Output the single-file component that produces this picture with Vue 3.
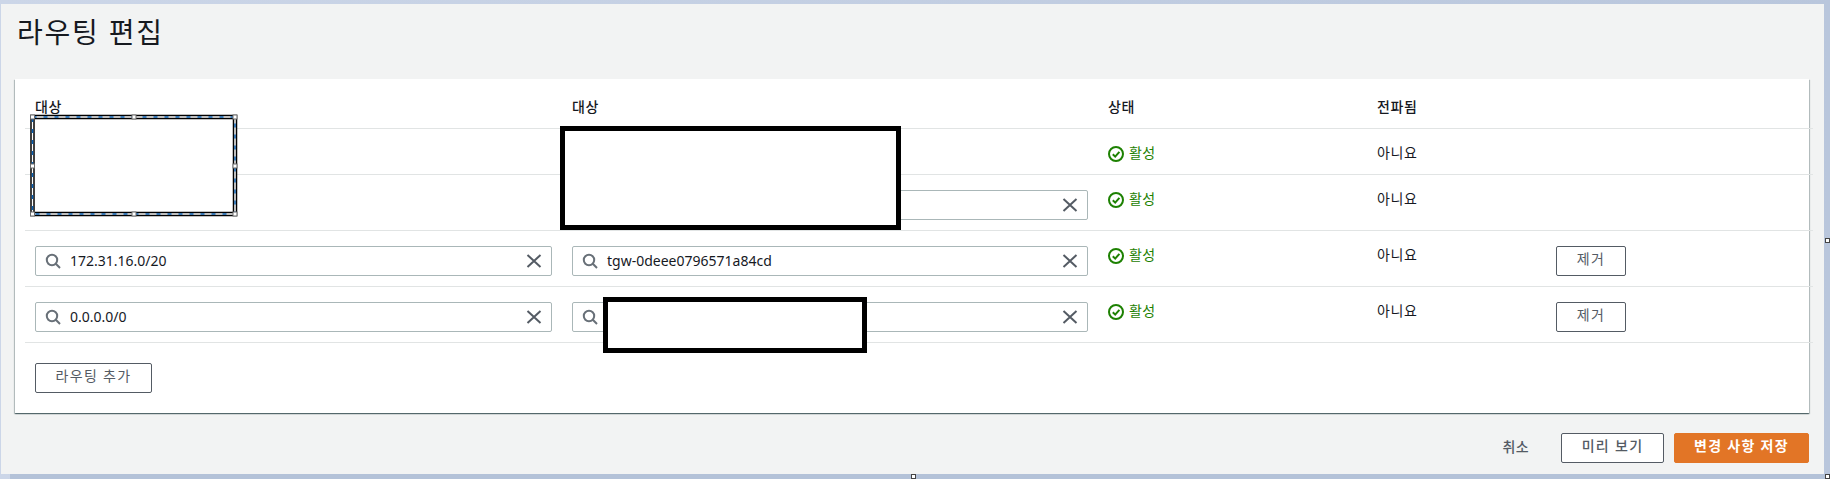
<script setup>
const rows = [
  { dest: null, target: null, removable: false },
  { dest: null, target: "", removable: false },
  { dest: "172.31.16.0/20", target: "tgw-0deee0796571a84cd", removable: true },
  { dest: "0.0.0.0/0", target: "", removable: true },
];

// handles of the selected redaction box
const handles = [
  [4.5, 5], [106, 5], [207, 5],
  [4.5, 54], [207, 54],
  [4.5, 102], [106, 102], [207, 102],
];
</script>

<template>
  <div class="window">
    <div class="page">
      <h1 class="title">라우팅 편집</h1>

      <section class="card">
        <table class="routes">
          <colgroup>
            <col class="col-dest" />
            <col class="col-target" />
            <col class="col-status" />
            <col class="col-prop" />
            <col />
          </colgroup>
          <thead>
            <tr>
              <th class="first">대상</th>
              <th>대상</th>
              <th>상태</th>
              <th>전파됨</th>
              <th></th>
            </tr>
          </thead>
          <tbody>
            <tr v-for="(row, i) in rows" :key="i">
              <td class="first">
                <div v-if="row.dest !== null" class="field">
                  <svg class="search" viewBox="0 0 16 16" width="16" height="16">
                    <circle cx="7" cy="7" r="5.2" />
                    <path d="M10.8 10.8 15 15" />
                  </svg>
                  <span class="value">{{ row.dest }}</span>
                  <svg class="clear" viewBox="0 0 16 16" width="16" height="16">
                    <path d="M1.5 2 14.5 14M14.5 2 1.5 14" />
                  </svg>
                </div>
              </td>
              <td>
                <div v-if="row.target !== null" class="field">
                  <svg class="search" viewBox="0 0 16 16" width="16" height="16">
                    <circle cx="7" cy="7" r="5.2" />
                    <path d="M10.8 10.8 15 15" />
                  </svg>
                  <span class="value">{{ row.target }}</span>
                  <svg class="clear" viewBox="0 0 16 16" width="16" height="16">
                    <path d="M1.5 2 14.5 14M14.5 2 1.5 14" />
                  </svg>
                </div>
              </td>
              <td>
                <div class="status">
                  <svg class="check" viewBox="0 0 16 16" width="16" height="16">
                    <circle cx="8" cy="8" r="7" />
                    <path d="M4.8 8.2 7.2 10.6 11.4 5.8" />
                  </svg>
                  <span class="status-text">활성</span>
                </div>
              </td>
              <td><div class="plain">아니요</div></td>
              <td>
                <button v-if="row.removable" class="btn remove">제거</button>
              </td>
            </tr>
          </tbody>
        </table>

        <button class="btn add">라우팅 추가</button>
      </section>

      <footer class="actions">
        <span class="cancel">취소</span>
        <button class="btn preview">미리 보기</button>
        <button class="btn save">변경 사항 저장</button>
      </footer>
    </div>

    <!-- redaction boxes pasted over the screenshot -->
    <svg class="selected" width="212" height="107" viewBox="0 0 212 107">
      <rect x="4.5" y="5" width="202.5" height="97" fill="#fff" stroke="#000" stroke-width="4.5" />
      <rect x="4.5" y="5" width="202.5" height="97" fill="none" stroke="#fff" stroke-width="1.5" />
      <rect x="4.5" y="5" width="202.5" height="97" fill="none" stroke="#0a5fb0" stroke-width="1.5" stroke-dasharray="4 7" />
      <rect
        v-for="(h, i) in handles"
        :key="i"
        :x="h[0] - 2"
        :y="h[1] - 2"
        width="4"
        height="4"
        fill="#fff"
        stroke="#6b6b6b"
      />
    </svg>
    <div class="redact redact-b"></div>
    <div class="redact redact-c"></div>

    <i class="grip grip-right"></i>
    <i class="grip grip-bottom"></i>
    <i class="grip grip-corner"></i>
  </div>
</template>

<style>
body {
  margin: 0;
  overflow: hidden;
}
</style>

<style scoped>
.window {
  position: relative;
  width: 1830px;
  height: 479px;
  box-sizing: border-box;
  padding: 4px 6px 5px 1px;
  background: linear-gradient(#b4c2d8, #b4c2d8) right bottom / calc(100% - 10px) 5px no-repeat,
    linear-gradient(90deg, #ccd6e8, #b9c6dc);
  font-family: "Noto Sans", "Noto Sans CJK KR", sans-serif;
  font-size: 14px;
  line-height: 20px;
  color: #16191f;
}

.page {
  height: 470px;
  background: #f2f3f3;
  display: flex;
  flex-direction: column;
}

.title {
  margin: 0;
  padding: 8px 0 0 16px;
  height: 75px;
  flex: none;
  box-sizing: border-box;
  font-size: 28px;
  font-weight: 400;
  line-height: 40px;
  letter-spacing: 1.8px;
}

.card {
  flex: none;
  margin-left: 14px;
  width: 1794px;
  height: 334px;
  box-sizing: border-box;
  padding-left: 10px;
  background: #fff;
  box-shadow: 0 1px 1px 0 rgba(0, 28, 36, 0.45), 1px 1px 1px 0 rgba(0, 28, 36, 0.2),
    -1px 1px 1px 0 rgba(0, 28, 36, 0.2);
}

.routes {
  width: 1788px;
  table-layout: fixed;
  border-collapse: separate;
  border-spacing: 0;
}

.col-dest {
  width: 537px;
}

.col-target {
  width: 536px;
}

.col-status {
  width: 269px;
}

.col-prop {
  width: 179px;
}

th {
  height: 20px;
  padding: 18px 10px 11px;
  text-align: left;
  font-weight: 500;
  font-size: 14px;
  letter-spacing: 0.6px;
  border-bottom: 1px solid #e1e4e4;
}

td {
  padding: 15px 10px 10px;
  vertical-align: top;
  border-bottom: 1px solid #e1e4e4;
}

.field {
  height: 30px;
  box-sizing: border-box;
  display: flex;
  align-items: center;
  background: #fff;
  border: 1px solid #aab7b8;
  border-radius: 2px;
  padding: 0 9px;
}

.value {
  flex: 1;
  margin-left: 9px;
  white-space: nowrap;
}

.search {
  fill: none;
  stroke: #687078;
  stroke-width: 2;
}

.clear {
  fill: none;
  stroke: #545b64;
  stroke-width: 2;
}

.status {
  display: flex;
  align-items: center;
  gap: 5px;
  height: 20px;
  color: #1d8102;
}

.status-text {
  margin-bottom: 2px;
  letter-spacing: 0.4px;
}

.plain {
  height: 20px;
  line-height: 18px;
  letter-spacing: 0.6px;
}

.check {
  fill: none;
  stroke: #1d8102;
  stroke-width: 2;
}

.btn {
  box-sizing: border-box;
  height: 30px;
  padding: 0 0 4px;
  background: #fff;
  border: 1px solid #545b64;
  border-radius: 2px;
  color: #545b64;
  font: inherit;
  letter-spacing: 1.3px;
}

.remove {
  width: 70px;
  display: block;
}

.add {
  display: block;
  width: 117px;
  margin: 20px 0 0 10px;
}

.actions {
  display: flex;
  justify-content: flex-end;
  align-items: center;
  width: 1808px;
  margin-top: 20px;
  gap: 10px;
}

.cancel {
  margin-right: 22px;
  margin-bottom: 2px;
  color: #545b64;
  font-weight: 500;
  letter-spacing: 0.4px;
}

.preview {
  width: 103px;
  font-weight: 500;
}

.save {
  width: 135px;
  background: #e27526;
  border-color: #e27526;
  color: #fff;
  font-weight: 700;
}

.selected {
  position: absolute;
  left: 28px;
  top: 112px;
}

.redact {
  position: absolute;
  box-sizing: border-box;
  background: #fff;
  border: 5px solid #000;
}

.redact-b {
  left: 560px;
  top: 126px;
  width: 341px;
  height: 104px;
}

.redact-c {
  left: 603px;
  top: 297px;
  width: 264px;
  height: 56px;
}

.grip {
  position: absolute;
  box-sizing: border-box;
  width: 5px;
  height: 5px;
  background: #fff;
  border: 1px solid #444;
}

.grip-right {
  left: 1825px;
  top: 238px;
}

.grip-bottom {
  left: 911px;
  top: 474px;
}

.grip-corner {
  left: 1825px;
  top: 474px;
}
</style>
